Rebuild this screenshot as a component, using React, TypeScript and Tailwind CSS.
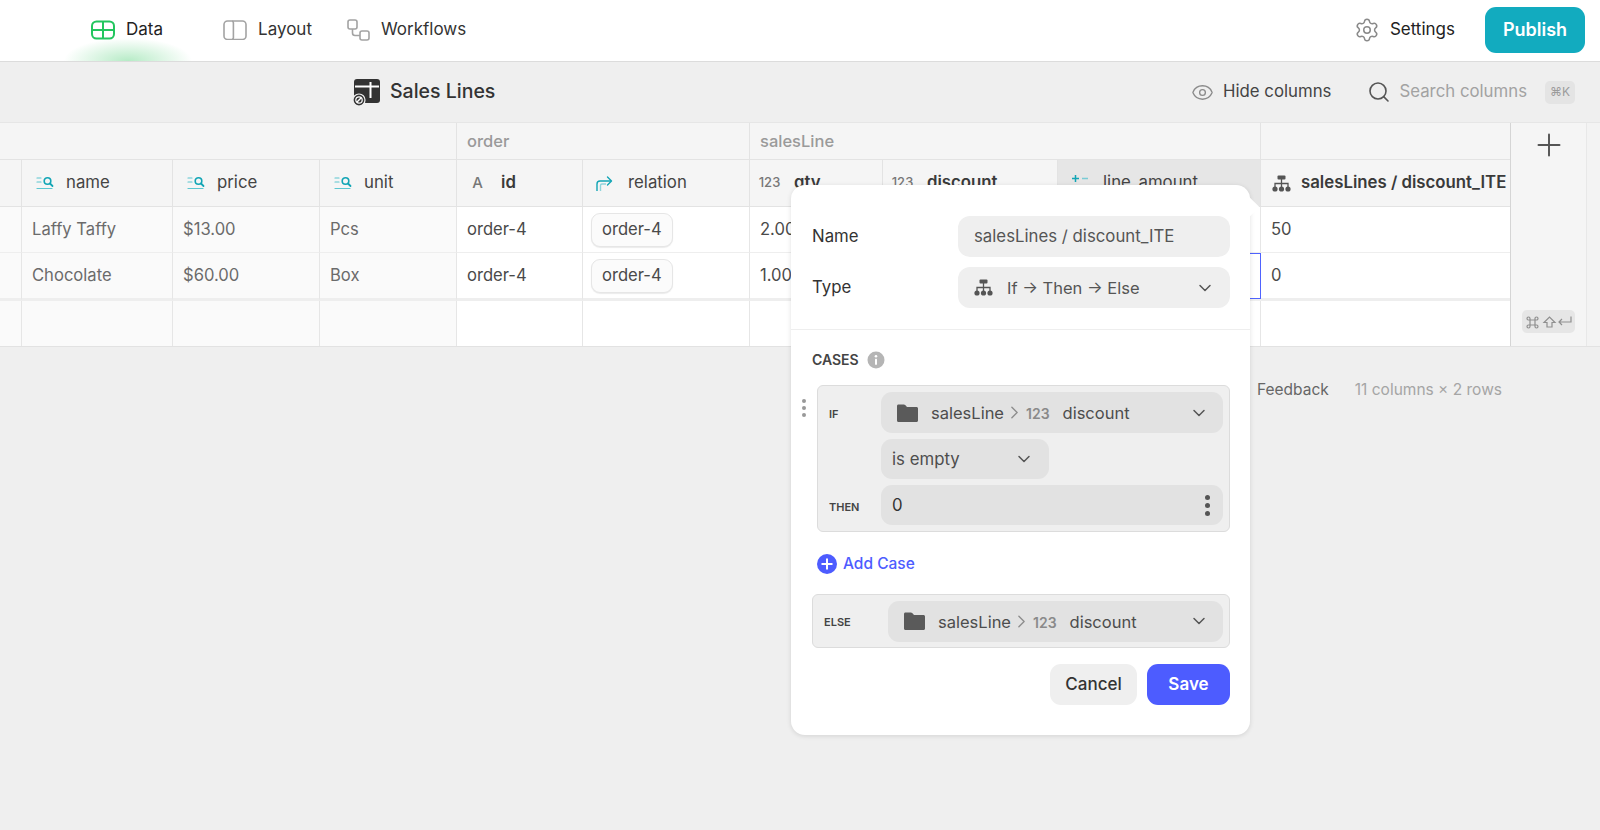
import { ChevronDown, ChevronRight, Eye, Plus, Search, Settings } from "lucide-react";
import type { ReactNode } from "react";

const FONT = "font-['Inter','Noto_Sans',sans-serif]";

function DataIcon() {
  return (
    <svg width="24" height="20" viewBox="0 0 24 20" fill="none" stroke="#22c55e" strokeWidth="2">
      <rect x="1" y="1.500" width="22" height="17" rx="4.500" />
      <path d="M1 10h22M12 1.500v17" />
    </svg>
  );
}

function LayoutIcon() {
  return (
    <svg width="24" height="20" viewBox="0 0 24 20" fill="none" stroke="#a3a3a3" strokeWidth="1.600">
      <rect x="1" y="1" width="22" height="18.500" rx="3.500" />
      <path d="M9 1.200c1 0 1.400.8 1.400 1.600v15c0 .9-.5 1.500-1.400 1.500" />
    </svg>
  );
}

function WorkflowIcon() {
  return (
    <svg width="23" height="22" viewBox="0 0 23 22" fill="none" stroke="#a3a3a3" strokeWidth="1.600">
      <rect x="1" y="1" width="9" height="9" rx="2" />
      <rect x="13" y="12" width="9" height="9" rx="2" />
      <path d="M5.500 10v4c0 1.500.8 2.500 2.500 2.500h5" />
    </svg>
  );
}

function SalesLinesIcon() {
  return (
    <svg width="28" height="28" viewBox="0 0 28 28">
      <rect x="2" y="1" width="26" height="24" rx="3" fill="#333" />
      <path d="M3 8.500h24M18.500 4v16" fill="none" stroke="#fff" strokeWidth="2" />
      <circle cx="7" cy="22" r="6" fill="#333" stroke="#efefef" strokeWidth="1.200" />
      <circle cx="7" cy="22" r="3.200" fill="none" stroke="#fff" strokeWidth="1.200" />
      <path d="M4.800 24.200l4.400-4.400" stroke="#fff" strokeWidth="1.400" />
    </svg>
  );
}

function LookupIcon() {
  return (
    <svg width="18" height="14" viewBox="0 0 18 14" fill="none" strokeLinecap="round">
      <path d="M1 2h4M1 6h4M1 12.500h15" stroke="#5cc6d0" strokeWidth="1.200" />
      <circle cx="11.500" cy="5" r="3.300" stroke="#12a5b5" strokeWidth="1.600" />
      <path d="M14 7.500l2.500 2.500" stroke="#12a5b5" strokeWidth="1.800" />
    </svg>
  );
}

function RelationIcon() {
  return (
    <svg width="17" height="15" viewBox="0 0 17 15" fill="none" strokeWidth="1.400">
      <path d="M1 15V8c0-2 1-3 3-3h11" stroke="#12a5b5" />
      <path d="M4.500 15V9.500c0-1 .5-1.500 1.500-1.500h4" stroke="#8fd4db" />
      <path d="M11.500 1l4 4-4 4" stroke="#12a5b5" strokeLinecap="round" strokeLinejoin="round" />
    </svg>
  );
}

function FormulaIcon() {
  return (
    <svg width="18" height="18" viewBox="0 0 18 18" fill="none" strokeWidth="1.500">
      <path d="M4.500 1v7M1 4.500h7" stroke="#12a5b5" />
      <path d="M11 4.500h6M11 13h6M1 12h7M1 15h7" stroke="#7accd5" />
    </svg>
  );
}

function TreeIcon({ color = "#555" }: { color?: string }) {
  return (
    <svg width="19" height="17" viewBox="0 0 19 17">
      <rect x="5.500" y="0.500" width="8" height="4" rx="1" fill={color} />
      <path d="M9.500 4v8M3 12V8.500h13V12" fill="none" stroke={color} strokeWidth="1.300" />
      <circle cx="3" cy="14" r="2.600" fill={color} />
      <circle cx="9.500" cy="14" r="2.600" fill={color} />
      <circle cx="16" cy="14" r="2.600" fill={color} />
    </svg>
  );
}

function FolderIcon() {
  return (
    <svg width="21" height="18" viewBox="0 0 21 18">
      <path d="M0 2c0-.8.6-1.500 1.500-1.500h5.300c.6 0 1 .2 1.400.6L10 3h9.500c.8 0 1.500.6 1.500 1.500v12c0 .8-.6 1.500-1.500 1.500h-18C.6 18 0 17.400 0 16.500z" fill="#5a5a5a" />
    </svg>
  );
}

function ShortcutIcons() {
  return (
    <svg width="46" height="14" viewBox="0 0 46 14" fill="none" stroke="#8f8f8f" strokeWidth="1.200">
      <path d="M4 5h5v5H4zM4 5H2.500a1.500 1.500 0 1 1 1.500-1.500zM9 5V3.500A1.500 1.500 0 1 1 10.500 5zM9 10h1.500A1.500 1.500 0 1 1 9 11.500zM4 10v1.500A1.500 1.500 0 1 1 2.500 10z" />
      <path d="M18 7.500l5.500-5.500L29 7.500h-3v4.500h-5V7.500z" />
      <path d="M45 1.500v5.500H33M36 4l-3 3 3 3" />
    </svg>
  );
}

function HeaderCell({ icon, label, strong, labelClass = "ml-3", bg = "bg-[#f5f5f5]", className = "" }: { icon: ReactNode; label: string; strong?: boolean; labelClass?: string; bg?: string; className?: string }) {
  return (
    <div className={`flex items-center ${bg} border-r border-b border-[#e3e3e3] whitespace-nowrap overflow-hidden ${className}`}>
      <span className="flex w-[19px] justify-center shrink-0 text-[13px] text-[#777] font-medium">{icon}</span>
      <span className={`${labelClass} text-[16.800px] ${strong ? "font-semibold text-[#3a3a3a]" : "text-[#444]"}`}>{label}</span>
    </div>
  );
}

function Cell({ children, frozen, selected, className = "" }: { children?: ReactNode; frozen?: boolean; selected?: boolean; className?: string }) {
  const border = selected ? "border border-[#4f63ff] mb-[2px]" : "border-r border-b border-r-[#e6e6e6] border-b-[#eeeeee]";
  return (
    <div className={`flex items-center pl-[10px] ${border} text-[16.600px] whitespace-nowrap overflow-hidden ${frozen ? "bg-[#fafafa] text-[#6b6b6b]" : "bg-white text-[#4a4a4a]"} ${className}`}>
      {children}
    </div>
  );
}

function Chip() {
  return <span className="flex h-[34px] items-center rounded-[9px] bg-[#fbfbfb] border border-[#e6e6e6] shadow-[0_1px_1px_rgba(0,0,0,0.08)] px-[10px] -ml-[2px] text-[#4a4a4a]">order-4</span>;
}

function FieldSelect({ className = "" }: { className?: string }) {
  return (
    <div className={`flex h-[41px] items-center rounded-[11px] bg-[#e2e2e2] pl-4 pr-[14px] text-[16.500px] text-[#4d4d4d] ${className}`}>
      <FolderIcon />
      <span className="ml-[13px] pt-[2px]">salesLine</span>
      <ChevronRight size={21} strokeWidth={1.600} className="text-[#8d8d8d]" />
      <span className="ml-[1px] pt-[2px] text-[14px] font-semibold text-[#8a8a8a]">123</span>
      <span className="ml-[13px] pt-[2px]">discount</span>
      <ChevronDown size={20} strokeWidth={1.800} className="ml-auto text-[#555]" />
    </div>
  );
}

export default function App() {
  const thick = "border-b-[3px] border-b-[#e9e9e9]";
  return (
    <div className={`${FONT} relative flex min-h-[830px] flex-col bg-[#efefef] text-[#222] overflow-hidden`}>
      <nav className="flex h-[62px] items-center bg-white border-b border-[#dcdcdc] pb-[1px] pl-[91px] pr-[15px] text-[17px] shrink-0">
        <div className="relative flex h-full items-center gap-[11px]">
          <DataIcon />
          <span className="text-[#222]">Data</span>
          <div className="absolute left-[-27px] top-[38px] h-[23px] w-[128px] bg-[radial-gradient(ellipse_50%_100%_at_50%_100%,#b6ebc6,rgba(255,255,255,0))]" />
        </div>
        <div className="ml-[60px] flex items-center gap-[11px]">
          <LayoutIcon />
          <span className="text-[#333]">Layout</span>
        </div>
        <div className="ml-[35px] flex items-center gap-[11px]">
          <WorkflowIcon />
          <span className="text-[#333]">Workflows</span>
        </div>
        <div className="ml-auto flex items-center gap-[10px]">
          <Settings size={26} strokeWidth={1.400} className="text-[#8a8a8a]" />
          <span className="text-[#222]">Settings</span>
        </div>
        <button className="ml-[30px] -mt-[1px] h-[46px] w-[100px] rounded-[11px] bg-[#12abbf] text-[18px] font-semibold text-white">Publish</button>
      </nav>

      <div className="flex h-[61px] items-center shrink-0 border-b border-[#e6e6e6] pl-[352px] pr-[25px]">
        <SalesLinesIcon />
        <span className="ml-[10px] text-[19.500px] font-medium text-[#333]">Sales Lines</span>
        <Eye size={23} strokeWidth={1.400} className="ml-auto text-[#8a8a8a]" />
        <span className="ml-[9px] text-[16.800px] text-[#444]">Hide columns</span>
        <Search size={24} strokeWidth={1.600} className="ml-[36px] text-[#555]" />
        <span className="ml-[8px] text-[16.800px] text-[#a2a2a2]">Search columns</span>
        <span className="ml-[18px] flex h-[23px] w-[30px] items-center justify-center rounded-[5px] bg-[#e4e4e4] text-[12px] text-[#9b9b9b]">⌘K</span>
      </div>

      <div className="flex shrink-0 h-[224px] border-b border-[#e2e2e2]">
        <div className="grid grid-cols-[22px_151px_147px_137px_126px_167px_133px_175px_203px_249px] grid-rows-[37px_47px_46px_48px_45px]">
          <div className="col-span-4 bg-[#f5f5f5] border-r border-b border-[#e3e3e3]" />
          <div className="col-span-2 flex items-center pl-[10px] bg-[#f5f5f5] border-r border-b border-[#e3e3e3] text-[16.500px] font-medium text-[#9a9a9a]">order</div>
          <div className="col-span-3 flex items-center pl-[10px] bg-[#f5f5f5] border-r border-b border-[#e3e3e3] text-[16.500px] font-medium text-[#9a9a9a]">salesLine</div>
          <div className="bg-[#f5f5f5] border-b border-[#e3e3e3]" />

          <div className="bg-[#f5f5f5] border-r border-b border-[#e3e3e3]" />
          <HeaderCell className="pl-[13px]" icon={<LookupIcon />} label="name" />
          <HeaderCell className="pl-[13px]" icon={<LookupIcon />} label="price" />
          <HeaderCell className="pl-[13px]" icon={<LookupIcon />} label="unit" />
          <HeaderCell className="pl-[11px]" labelClass="ml-[14px]" icon={<span className="text-[15px]">A</span>} label="id" strong />
          <HeaderCell className="pl-[12px]" labelClass="ml-[14px]" icon={<RelationIcon />} label="relation" />
          <HeaderCell className="pl-[10px]" labelClass="ml-[15px]" icon="123" label="qty" strong />
          <HeaderCell className="pl-[10px]" labelClass="ml-[15px]" icon="123" label="discount" strong />
          <HeaderCell className="pl-[12px]" labelClass="ml-[14px]" bg="bg-[#e6e6e6]" icon={<FormulaIcon />} label="line_amount" />
          <HeaderCell className="pl-[11px] border-r-0" labelClass="ml-[10px]" icon={<TreeIcon />} label="salesLines / discount_ITE" strong />

          <Cell frozen />
          <Cell frozen>Laffy Taffy</Cell>
          <Cell frozen>$13.00</Cell>
          <Cell frozen>Pcs</Cell>
          <Cell>order-4</Cell>
          <Cell><Chip /></Cell>
          <Cell>2.00</Cell>
          <Cell />
          <Cell />
          <Cell className="border-r-0">50</Cell>

          <Cell frozen className={thick} />
          <Cell frozen className={thick}>Chocolate</Cell>
          <Cell frozen className={thick}>$60.00</Cell>
          <Cell frozen className={thick}>Box</Cell>
          <Cell className={thick}>order-4</Cell>
          <Cell className={thick}><Chip /></Cell>
          <Cell className={thick}>1.00</Cell>
          <Cell className={thick} />
          <Cell selected />
          <Cell className={`border-r-0 ${thick}`}>0</Cell>

          <Cell frozen className="border-b-0" />
          <Cell frozen className="border-b-0" />
          <Cell frozen className="border-b-0" />
          <Cell frozen className="border-b-0" />
          <Cell className="border-b-0" />
          <Cell className="border-b-0" />
          <Cell className="border-b-0" />
          <Cell className="border-b-0" />
          <Cell className="border-b-0" />
          <Cell className="border-r-0 border-b-0" />
        </div>
        <div className="flex w-[77px] flex-col items-center justify-between bg-[#f5f5f5] border-x border-l-[#d5d5d5] border-r-[#e8e8e8] pt-[4px] pb-[13px]">
          <Plus size={36} strokeWidth={1.300} className="text-[#555]" />
          <span className="flex h-[23px] w-[53px] items-center justify-center rounded-[5px] bg-[#e6e6e6]">
            <ShortcutIcons />
          </span>
        </div>
        <div className="flex-1 bg-[#f3f3f3]" />
      </div>

      <div className="flex justify-end pr-[98px] pt-[31px] text-[15.500px]">
        <span className="text-[#666]">Feedback</span>
        <span className="ml-[26px] text-[#a5a5a5]">11 columns × 2 rows</span>
      </div>

      <div className="absolute left-[791px] top-[185px] z-10 h-[550px] w-[459px] rounded-[14px] bg-white shadow-[0_1px_5px_rgba(0,0,0,0.12)]">
        <div className="absolute right-[-6px] top-[14px] h-4 w-4 rotate-45 bg-white" />
        <div className="relative flex flex-col pl-[21px] pr-[20px] pt-[31px]">
          <div className="flex items-center justify-between">
            <span className="text-[16.800px] text-[#333]">Name</span>
            <div className="flex h-[41px] w-[272px] items-center rounded-[12px] bg-[#efefef] px-4 text-[16.800px] text-[#555]">salesLines / discount_ITE</div>
          </div>
          <div className="mt-[10px] flex items-center justify-between">
            <span className="pt-[1px] text-[16.800px] text-[#333]">Type</span>
            <div className="flex h-[41px] w-[272px] items-center rounded-[12px] bg-[#efefef] pl-4 pr-[15px] text-[16.500px] text-[#555]">
              <TreeIcon />
              <span className="ml-[14px] pt-[1px]">If → Then → Else</span>
              <ChevronDown size={20} strokeWidth={1.800} className="ml-auto text-[#555]" />
            </div>
          </div>
        </div>
        <div className="mt-[21px] border-t border-[#eeeeee]" />
        <div className="flex flex-col pl-[21px] pr-[20px]">
          <div className="mt-[19px] flex items-center gap-2">
            <span className="text-[14px] font-semibold text-[#444]">CASES</span>
            <svg width="18" height="18" viewBox="0 0 18 18">
              <circle cx="9" cy="9" r="8.500" fill="#b5b5b5" />
              <circle cx="9" cy="5.200" r="1.300" fill="#fff" />
              <rect x="8" y="7.800" width="2" height="6" rx="0.500" fill="#fff" />
            </svg>
          </div>
          <div className="relative ml-[5px] mt-[15px] flex h-[147px] flex-col gap-[6px] rounded-[6px] border border-[#dcdcdc] bg-[#efefef] p-[6px] pl-[63px]">
            <div className="absolute left-[-16px] top-[13px] flex flex-col gap-[3px]">
              <span className="h-[4px] w-[4px] rounded-full bg-[#999]" />
              <span className="h-[4px] w-[4px] rounded-full bg-[#999]" />
              <span className="h-[4px] w-[4px] rounded-full bg-[#999]" />
            </div>
            <span className="absolute left-[11px] top-[20px] text-[11px] font-semibold text-[#444]">IF</span>
            <span className="absolute left-[11px] top-[113px] text-[11px] font-semibold text-[#444]">THEN</span>
            <FieldSelect />
            <div className="flex h-[40px] w-[168px] items-center rounded-[11px] bg-[#e2e2e2] pl-[11px] pr-[15px] text-[16.800px] text-[#4d4d4d]">
              <span className="pt-[2px]">is empty</span>
              <ChevronDown size={20} strokeWidth={1.800} className="ml-auto text-[#555]" />
            </div>
            <div className="flex h-[40px] items-center rounded-[11px] bg-[#e2e2e2] pl-[11px] pr-[13px] text-[16.800px] text-[#333]">
              <span className="pt-[2px]">0</span>
              <span className="ml-auto flex flex-col gap-[3px]">
                <span className="h-[5px] w-[5px] rounded-full bg-[#555]" />
                <span className="h-[5px] w-[5px] rounded-full bg-[#555]" />
                <span className="h-[5px] w-[5px] rounded-full bg-[#555]" />
              </span>
            </div>
          </div>
          <div className="ml-[5px] mt-[20px] flex items-center gap-[6px]">
            <svg width="20" height="20" viewBox="0 0 20 20">
              <circle cx="10" cy="10" r="10" fill="#4d5cff" />
              <path d="M10 4.500v11M4.500 10h11" stroke="#fff" strokeWidth="2" />
            </svg>
            <span className="text-[15.500px] font-medium text-[#4d5cff]">Add Case</span>
          </div>
          <div className="relative mt-[19px] flex h-[54px] items-center rounded-[6px] border border-[#dcdcdc] bg-[#efefef] pl-[75px] pr-[6px]">
            <span className="absolute left-[11px] top-[19px] text-[11px] font-semibold text-[#444]">ELSE</span>
            <FieldSelect className="flex-1" />
          </div>
          <div className="mt-[16px] flex justify-end gap-[10px]">
            <button className="h-[41px] w-[87px] rounded-[11px] bg-[#efefef] text-[17px] font-medium text-[#333]">Cancel</button>
            <button className="h-[41px] w-[83px] rounded-[11px] bg-[#4d5cff] text-[17px] font-semibold text-white">Save</button>
          </div>
        </div>
      </div>
    </div>
  );
}
